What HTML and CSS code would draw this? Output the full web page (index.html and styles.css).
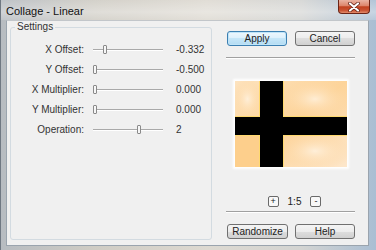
FILE: index.html
```html
<!DOCTYPE html>
<html lang="en">
<head>
    <meta charset="UTF-8">
    <meta name="viewport" content="width=device-width, initial-scale=1.0">
    <title>Collage - Linear</title>
    <link rel="stylesheet" href="styles.css">
</head>
<body>
    <div class="window">
        <!-- Barra de título -->
        <div class="titlebar">
            <span class="title">Collage - Linear</span>
            <button class="close-btn" type="button" aria-label="Close">
                <svg width="14" height="10" viewBox="0 0 14 10">
                    <path d="M3 1.5 L11 8.5 M11 1.5 L3 8.5" stroke="#5a1a10" stroke-width="3.6" stroke-linecap="round"/>
                    <path d="M3 1.5 L11 8.5 M11 1.5 L3 8.5" stroke="#ffffff" stroke-width="2.2" stroke-linecap="round"/>
                </svg>
            </button>
        </div>

        <div class="client">
            <!-- Grupo de parâmetros -->
            <fieldset class="settings">
                <legend>Settings</legend>
                <div class="rows">
                    <label>X Offset:</label>
                    <div class="slider"><span class="thumb" style="margin-left: 10px"></span></div>
                    <span class="value">-0.332</span>

                    <label>Y Offset:</label>
                    <div class="slider"><span class="thumb" style="margin-left: 0px"></span></div>
                    <span class="value">-0.500</span>

                    <label>X Multiplier:</label>
                    <div class="slider"><span class="thumb" style="margin-left: 0px"></span></div>
                    <span class="value">0.000</span>

                    <label>Y Multiplier:</label>
                    <div class="slider"><span class="thumb" style="margin-left: 0px"></span></div>
                    <span class="value">0.000</span>

                    <label>Operation:</label>
                    <div class="slider"><span class="thumb" style="margin-left: 44px"></span></div>
                    <span class="value">2</span>
                </div>
            </fieldset>

            <!-- Painel lateral -->
            <div class="side">
                <div class="btn-row">
                    <button class="btn default" type="button">Apply</button>
                    <button class="btn" type="button">Cancel</button>
                </div>
                <div class="sep"></div>

                <div class="preview">
                    <svg width="112" height="86" viewBox="0 0 112 86">
                        <defs>
                            <linearGradient id="bg" x1="0" y1="0" x2="1" y2="1">
                                <stop offset="0" stop-color="#fde3bf"/>
                                <stop offset="0.5" stop-color="#fdd49a"/>
                                <stop offset="1" stop-color="#fde7cc"/>
                            </linearGradient>
                            <radialGradient id="glowA" cx="0.5" cy="0.5" r="0.6">
                                <stop offset="0" stop-color="#fff3e2" stop-opacity="0.8"/>
                                <stop offset="1" stop-color="#fdcf90" stop-opacity="0"/>
                            </radialGradient>
                        </defs>
                        <rect width="112" height="86" fill="url(#bg)"/>
                        <rect x="0" y="0" width="25" height="36" fill="url(#glowA)"/>
                        <rect x="48" y="0" width="64" height="36" fill="url(#glowA)"/>
                        <rect x="0" y="54" width="25" height="32" fill="#fdcf8c"/>
                        <rect x="48" y="54" width="64" height="32" fill="url(#glowA)"/>
                        <rect x="24" y="0" width="25" height="86" fill="#ffd96e"/>
                        <rect x="0" y="35" width="112" height="20" fill="#ffd96e"/>
                        <rect x="25" y="0" width="23" height="86" fill="#000"/>
                        <rect x="0" y="36" width="112" height="18" fill="#000"/>
                    </svg>
                </div>

                <div class="zoom-row">
                    <span class="zoom-box">+</span>
                    <span class="ratio">1:5</span>
                    <span class="zoom-box">-</span>
                </div>
                <div class="sep sep-bottom"></div>

                <div class="btn-row btn-row-bottom">
                    <button class="btn wide" type="button">Randomize</button>
                    <button class="btn" type="button">Help</button>
                </div>
            </div>
        </div>
    </div>
</body>
</html>
```

FILE: styles.css
```css
body {
    margin: 0;
    font-family: "Liberation Sans Narrow", "Liberation Sans", Arial, sans-serif;
    font-size: 10px;
    color: #2a2a2a;
}
.window {
    width: 376px;
    height: 250px;
    box-sizing: border-box;
    border-left: 1px solid #6f7882;
    background: linear-gradient(to right, #b7bcc1, #cfccc4 25%, #ddd9d1 55%, #d3d4d2 80%, #aabed3);
    display: flex;
    flex-direction: column;
}
.titlebar {
    height: 20px;
    display: flex;
    align-items: flex-start;
    background: linear-gradient(to bottom, rgba(255, 255, 255, 0.1), rgba(255, 255, 255, 0.35) 60%, rgba(255, 255, 255, 0.15));
}
.title {
    font-size: 11px;
    line-height: 20px;
    padding: 1px 0 0 5px;
    color: #111;
}
.close-btn {
    margin-left: auto;
    margin-right: 6px;
    width: 32px;
    height: 14px;
    padding: 0;
    border: 1px solid #6b2416;
    border-top: none;
    border-radius: 0 0 4px 4px;
    background: linear-gradient(to bottom, #eab3a2, #dc846a 45%, #c1411f 52%, #c95333 80%, #e38c6c);
    display: flex;
    align-items: center;
    justify-content: center;
}
.client {
    margin: 0 7px 4px 5px;
    height: 226px;
    box-sizing: border-box;
    border: 1px solid #9aa4ae;
    border-top-color: #c2c6ca;
    background-color: #f0f0f0;
    display: flex;
    align-items: flex-start;
}
.settings {
    margin: 0 0 0 3px;
    width: 202px;
    height: 219px;
    box-sizing: border-box;
    padding: 6px 0 0 0;
    border: 1px solid #d3dbe1;
    border-radius: 3px;
}
.settings legend {
    margin-left: 4px;
    padding: 0 2px;
    line-height: 12px;
    color: #333;
}
.rows {
    display: grid;
    grid-template-columns: 73px 79px 1fr;
    grid-auto-rows: 20px;
    align-items: center;
}
.rows label {
    text-align: right;
    color: #333;
}
.slider {
    margin-left: 9px;
    height: 9px;
    display: flex;
    align-items: center;
    background: linear-gradient(to bottom, transparent 4px, #a9a9a9 4px, #a9a9a9 5px, #ffffff 5px, #ffffff 6px, transparent 6px);
}
.thumb {
    width: 2px;
    height: 7px;
    border: 1px solid #8a8a8a;
    border-radius: 1px;
    background-color: #f6f6f6;
}
.value {
    padding-left: 13px;
    color: #333;
}
.side {
    margin-left: 14px;
    width: 129px;
    padding-top: 10px;
}
.btn-row {
    display: flex;
    gap: 8px;
    padding-left: 1px;
}
.btn {
    width: 60px;
    height: 15px;
    padding: 0;
    font-family: inherit;
    font-size: 10px;
    line-height: 13px;
    color: #222;
    border: 1px solid #707070;
    border-radius: 3px;
    background: linear-gradient(to bottom, #f4f4f4, #ececec 50%, #dedede 50%, #d0d0d0);
}
.btn.default {
    border-color: #3c7fb1;
    background: linear-gradient(to bottom, #eef7fd, #dcf0fc 50%, #c6e6f8 50%, #b3dcf3);
    box-shadow: inset 0 0 0 1px #bfe4f8;
}
.btn.wide {
    width: 61px;
}
.btn-row-bottom .btn + .btn {
    margin-left: -1px;
}
.sep {
    margin-top: 11px;
    height: 1px;
    background-color: #a0a0a0;
    border-bottom: 1px solid #ffffff;
}
.preview {
    width: 112px;
    height: 86px;
    margin: 22px auto 0;
    box-shadow: 0 0 2px 2px #ffffff;
}
.preview svg {
    display: block;
}
.zoom-row {
    margin-top: 28px;
    height: 12px;
    display: flex;
    align-items: center;
    justify-content: center;
    gap: 9px;
    padding-left: 8px;
}
.zoom-box {
    width: 9px;
    height: 9px;
    border: 1px solid #6a6a6a;
    border-radius: 2px;
    background-color: #f8f8f8;
    font-size: 9px;
    line-height: 9px;
    text-align: center;
    color: #222;
}
.ratio {
    font-size: 10px;
    color: #222;
}
.sep-bottom {
    margin-top: 4px;
}
.btn-row-bottom {
    margin-top: 11px;
}
```
